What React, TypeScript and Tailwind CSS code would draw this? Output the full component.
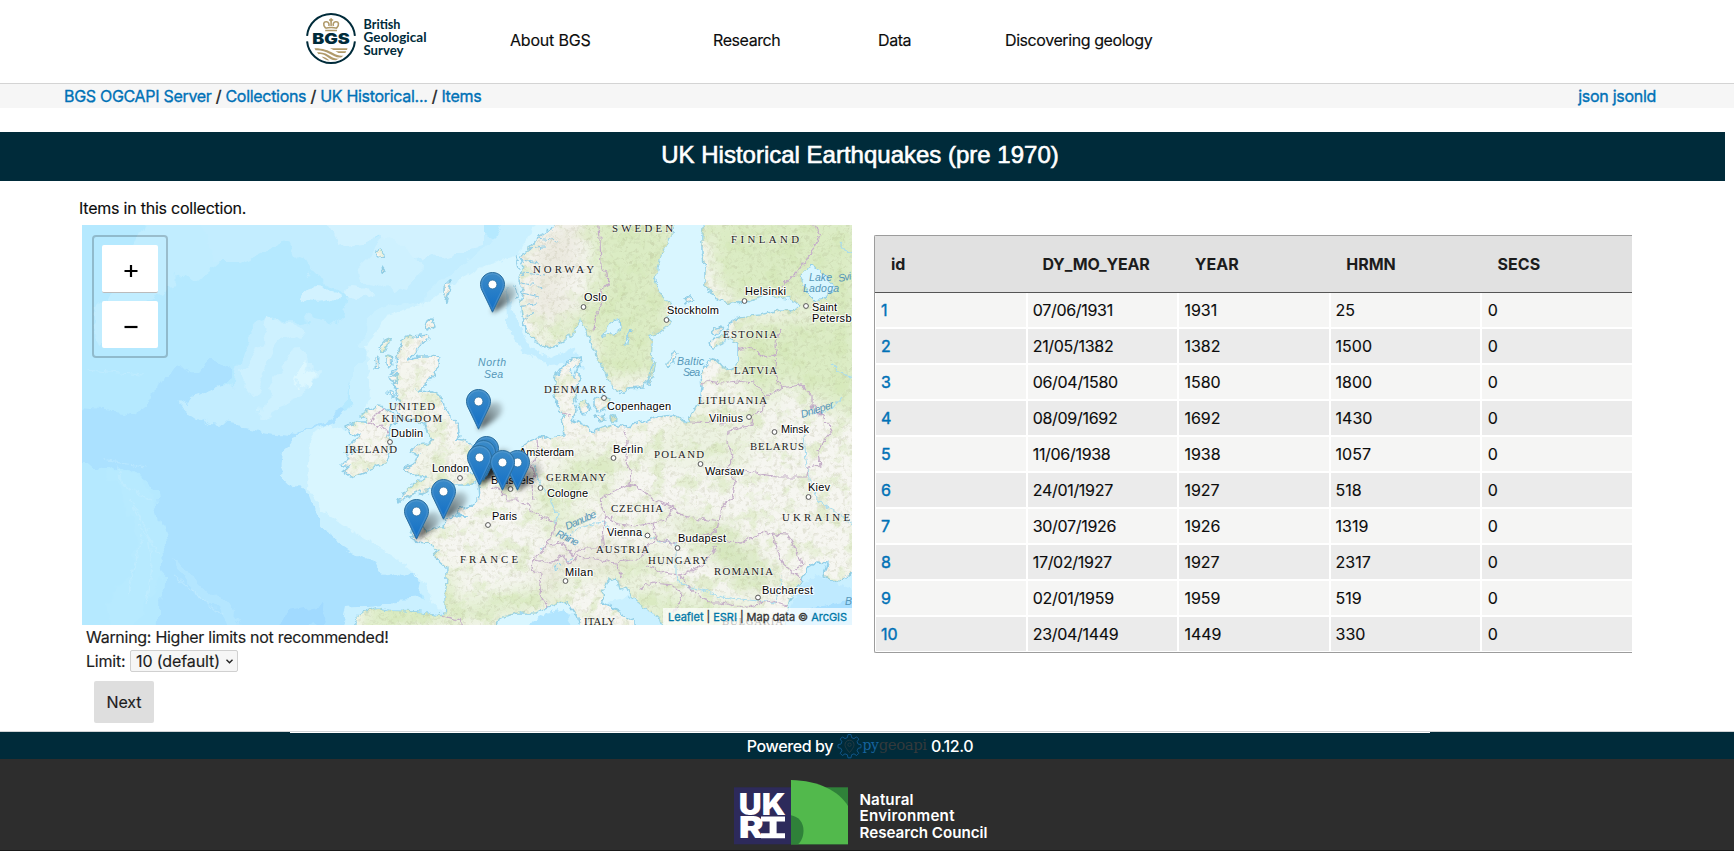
import React from "react";

const rows = [
  ["1", "07/06/1931", "1931", "25", "0"],
  ["2", "21/05/1382", "1382", "1500", "0"],
  ["3", "06/04/1580", "1580", "1800", "0"],
  ["4", "08/09/1692", "1692", "1430", "0"],
  ["5", "11/06/1938", "1938", "1057", "0"],
  ["6", "24/01/1927", "1927", "518", "0"],
  ["7", "30/07/1926", "1926", "1319", "0"],
  ["8", "17/02/1927", "1927", "2317", "0"],
  ["9", "02/01/1959", "1959", "519", "0"],
  ["10", "23/04/1449", "1449", "330", "0"],
];

// [name, x, baseline, width]
const countries: [string, number, number, number][] = [
  ["SWEDEN", 530, 7, 61], ["FINLAND", 649, 18, 68], ["NORWAY", 451, 48, 61],
  ["ESTONIA", 641, 113, 54], ["LATVIA", 652, 149, 43], ["LITHUANIA", 616, 179, 69],
  ["DENMARK", 462, 168, 62], ["UNITED", 307, 185, 46], ["KINGDOM", 300, 197, 60],
  ["IRELAND", 263, 228, 52], ["FRANCE", 378, 338, 58], ["GERMANY", 464, 256, 60],
  ["POLAND", 572, 233, 50], ["BELARUS", 668, 225, 54], ["CZECHIA", 529, 287, 52],
  ["UKRAINE", 700, 296, 68], ["AUSTRIA", 514, 328, 53], ["HUNGARY", 566, 339, 60],
  ["ROMANIA", 632, 350, 59], ["ITALY", 502, 400, 31], ["BULGARIA", 640, 400, 61],
];

// [name, x, baseline, width, dot x, dot y]
const cities: [string, number, number, number, number, number][] = [
  ["Oslo", 502, 76, 23, 501.5, 82], ["Stockholm", 585, 89, 52, 584.5, 95],
  ["Helsinki", 663, 70, 41, 662.5, 76], ["Saint", 730, 86, 25, 724, 81],
  ["Copenhagen", 525, 185, 64, 522, 173], ["Vilnius", 627, 197, 34, 667, 192],
  ["Minsk", 699, 208, 28, 692.5, 207], ["Dublin", 309, 212, 32, 308, 217],
  ["London", 350, 247, 37, 378, 253], ["Amsterdam", 437, 231, 55, 433, 236],
  ["Brussels", 409, 259, 43, 428.5, 264], ["Paris", 410, 295, 25, 406, 300],
  ["Cologne", 465, 272, 41, 458.5, 263], ["Berlin", 531, 228, 30, 531.5, 233],
  ["Warsaw", 623, 250, 39, 618.5, 239], ["Kiev", 726, 266, 22, 726.5, 272],
  ["Vienna", 525, 311, 35, 565.5, 310.5], ["Budapest", 596, 317, 48, 595.5, 323],
  ["Milan", 483, 351, 28, 483.5, 356], ["Bucharest", 680, 369, 51, 676, 372.5],
];

// [name, x, baseline, width, rotation]
const waters: [string, number, number, number, number][] = [
  ["North", 396, 141, 28, 0], ["Sea", 402, 153, 19, 0],
  ["Baltic", 595, 140, 27, 0], ["Sea", 601, 151, 17, 0],
  ["Lake", 727, 56, 23, 0], ["Ladoga", 721, 67, 36, 0],
  ["Svi", 757, 57, 13, -12], ["Dnieper", 720, 193, 34, -18],
  ["Danube", 485, 305, 33, -24], ["Rhine", 473, 311, 24, 25], ["B", 763, 380, 7, 0],
];

// left edge and top of each pin, north to south
const pins: [number, number][] = [
  [398, 47], [384, 164], [392, 211], [389, 215], [385, 220], [423, 225], [408, 225], [349, 254], [322, 274],
];

const BRITAIN =
  "M321 114L324 111L333 112L344 110L346 114L340 119L334 126L327 134L337 131L347 131L358 132L357 139L352 149L346 157L340 163L336 166L347 165L354 168L359 173L362 181L367 191L376 199L377 207L379 211L374 215L380 216L391 220L392 229L388 239L384 246L395 248L395 255L388 260L370 260L356 263L347 264L341 270L336 267L324 272L316 278L320 270L330 261L338 254L346 253L336 250L326 248L322 244L332 239L336 230L328 227L334 220L345 219L350 215L345 207L343 199L338 198L332 194L324 196L318 191L314 184L318 175L313 172L317 163L309 160L315 153L310 148L315 143L314 134L317 126Z";
const IRELAND =
  "M303 182L311 188L314 196L309 202L306 209L308 217L308 228L304 238L292 241L282 248L271 252L261 247L267 242L260 240L267 233L264 228L276 226L266 222L273 215L279 211L266 207L264 201L275 197L285 197L280 191L287 184L296 181Z";
const CONTINENT =
  "M498 132L484 138L474 150L472 165L475 180L480 190L481 203L482 210L474 211L468 215L462 211L448 216L440 222L436 233L431 243L418 250L404 253L397 262L398 273L389 281L378 284L375 290L384 291L372 292L363 295L362 303L350 302L346 306L335 300L328 305L332 311L328 312L336 317L346 318L356 326L352 331L365 343L365 357L363 372L364 387L359 390L335 387L310 386L295 383L281 387L274 393L274 412L410 412L418 393L435 388L453 388L466 382L478 376L488 380L496 392L499 412L553 412L553 397L538 387L521 377L520 367L525 357L535 353L538 364L545 362L550 373L565 385L578 393L585 412L701 412L704 388L706 380L711 367L720 357L725 343L735 337L746 338L741 350L754 358L764 351L785 344L785 -12L623 -12L620 10L620 27L623 43L623 60L635 75L648 78L665 77L685 70L706 73L718 80L711 86L698 85L678 90L658 92L645 100L646 113L656 118L656 137L651 145L641 142L633 133L625 138L619 150L620 163L618 177L611 187L605 197L591 190L575 192L558 197L545 202L531 200L521 203L511 207L503 200L491 196L494 186L492 177L495 170L493 163L499 153L494 147L499 139Z";
const SCANDINAVIA =
  "M478 -12L470 3L461 10L455 13L448 23L438 33L442 42L436 53L442 65L438 76L440 90L443 105L455 118L468 123L481 117L493 105L498 93L503 103L510 120L515 133L525 150L528 160L541 170L545 163L561 162L568 150L570 133L571 117L565 110L578 107L588 100L585 92L591 83L578 68L573 53L575 42L578 30L586 17L591 7L593 -12Z";
const ISLANDS =
  "M496 178L504 176L508 184L502 189L497 185Z M512 174L520 170L527 174L524 184L517 187L512 181Z M513 191L521 190L524 195L516 196Z M528 193L532 191L534 195L530 197Z M586 138L592 127L596 128L592 136L587 142Z M565 160L572 138L574 138L568 160Z M630 104L638 102L641 106L633 109Z M628 116L640 111L644 116L636 120L630 124Z M603 73L609 71L611 76L605 78Z M297 123L305 114L308 115L304 124L301 128Z M294 133L297 130L296 143L293 144Z M304 130L309 131L311 140L307 143L304 138Z M307 152L314 149L316 156L310 159Z M306 168L311 166L311 173Z M362 62L369 55L367 67L364 77L362 69Z M343 97L350 94L352 101L345 105Z M294 26L299 24L302 30L299 34L295 30Z M300 40L303 44L301 48Z";
const LAND = [BRITAIN, IRELAND, CONTINENT, SCANDINAVIA, ISLANDS].join(" ");
const BORDERS =
  "M516 -10L518 15L519 40L525 48L526 58L518 68L521 78L514 88L512 105M728 -8L738 10L728 30L715 47L699 62M656 125L668 122L676 128L685 133L695 130L693 120L699 103M695 133L692 148L700 163L684 171L672 158L655 156L640 158L625 156L620 160M700 163L718 160L730 170L730 180L739 190L750 205L742 215L736 228L738 240L726 242L725 252L695 252L668 247L646 244M684 171L680 186L671 190L670 200L647 206L646 218L651 230L646 244L653 258L651 273L640 282L637 297M606 197L647 198M541 203L545 215L544 235L549 247L547 260L560 264L574 276L591 282L600 291L637 297M547 260L530 268L518 274L523 290L537 299L554 301L570 298L584 296L591 282M570 298L575 314L590 318L610 316L635 305L637 297M523 290L520 310L522 323L502 323L490 330L480 318L466 320M475 297L460 292L450 288L446 280L435 275L425 275L418 265L410 262M475 297L466 320L452 333L450 343L460 349L458 370L466 382M452 335L470 338L480 330L488 340L495 332L520 335L532 338L560 333L565 322L575 314M532 338L540 352M565 340L580 348L598 350L620 340L635 320M598 350L605 360L615 369L630 378L640 378M558 363L570 358L590 360L600 370L592 388M635 312L660 318L680 307L690 309L700 338L720 355M690 309L705 310L715 325L720 340L712 345M640 378L660 383L690 376L706 380M455 215L456 230L449 240L453 250L450 260L452 275M480 188L488 191M303 182L294 190L287 197L295 202L300 200L306 207M359 390L378 396L385 408";
const RIVERS =
  "M452 240L458 260L470 275L475 290L473 300M484 310L500 302L520 297L530 306L565 312L580 316L594 318L594 350L600 360L620 365L640 372L676 376L695 378L700 350M722 190L735 188L748 186L760 172M722 210L724 235L727 250L735 275L750 285L780 306M750 140L760 148L780 157M758 18L765 28L780 34";

function EuropeMap() {
  return (
    <svg width="770" height="400" viewBox="0 0 770 400" className="block">
      <defs>
        <clipPath id="land"><path d={LAND} /></clipPath>
        <filter id="soft" x="-20%" y="-20%" width="140%" height="140%"><feGaussianBlur stdDeviation="9" /></filter>
        <filter id="shade" x="-60%" y="-60%" width="220%" height="220%"><feGaussianBlur stdDeviation="2.6" /></filter>
        <filter id="rough" filterUnits="userSpaceOnUse" x="-15" y="-15" width="800" height="430">
          <feTurbulence type="fractalNoise" baseFrequency="0.16" numOctaves="3" seed="4" result="n" />
          <feDisplacementMap in="SourceGraphic" in2="n" scale="7" xChannelSelector="R" yChannelSelector="G" />
        </filter>
        <filter id="depths" filterUnits="userSpaceOnUse" x="-30" y="-30" width="830" height="460">
          <feTurbulence type="fractalNoise" baseFrequency="0.028" numOctaves="4" seed="8" result="n" />
          <feDisplacementMap in="SourceGraphic" in2="n" scale="34" xChannelSelector="R" yChannelSelector="G" />
        </filter>
        <filter id="forest" x="0" y="0" width="100%" height="100%" colorInterpolationFilters="sRGB">
          <feTurbulence type="fractalNoise" baseFrequency="0.06" numOctaves="5" seed="11" />
          <feColorMatrix values="0 0 0 0 0.82  0 0 0 0 0.9  0 0 0 0 0.7  3.4 2 0 0 -2.65" />
        </filter>
        <filter id="relief" x="0" y="0" width="100%" height="100%" colorInterpolationFilters="sRGB">
          <feTurbulence type="fractalNoise" baseFrequency="0.25" numOctaves="3" seed="2" />
          <feColorMatrix values="0 0 0 0 0.62  0 0 0 0 0.62  0 0 0 0 0.48  3 0 0 0 -1.5" />
        </filter>
        <linearGradient id="pin" x1="0" y1="0" x2="0" y2="1">
          <stop offset="0" stopColor="#3b8bc8" /><stop offset="1" stopColor="#126fc6" />
        </linearGradient>
        <linearGradient id="fall" x1="0" y1="1" x2="1" y2="0">
          <stop offset="0" stopColor="#000" stopOpacity=".75" /><stop offset=".45" stopColor="#000" stopOpacity=".45" /><stop offset="1" stopColor="#000" stopOpacity=".08" />
        </linearGradient>
      </defs>

      <rect width="770" height="400" fill="#b5e9ff" />
      <g filter="url(#depths)">
        <path d="M-20 185L40 190L75 165L100 148L135 128L150 150L130 178L160 200L210 180L250 172L262 195L222 215L220 260L240 300L300 330L345 365L345 420L75 420L78 330L70 260L30 235L-20 240Z" fill="#abe1ff" />
        <path d="M75 -20L135 -20L145 30L115 55L80 60L60 90L20 120L10 90L50 50Z" fill="#c1edff" />
        <path d="M120 -20L250 -20L290 15L380 -20L420 20L350 85L285 110L270 180L215 210L130 200L100 180L150 160L155 130L175 105L225 92L260 100L265 70L225 50L205 15L160 35L130 35Z" fill="#c3edff" />
        <path d="M230 -20L400 -20L400 15L330 35L290 12L250 18Z" fill="#d2f2ff" />
        <path d="M285 25Q305 5 335 30Q345 52 310 70Q280 55 285 25M155 150L190 100L220 98L222 110L192 122L170 170ZM205 135Q230 115 232 140L205 185L180 195L185 160Z" fill="#ceF1ff" />
        <ellipse cx="240" cy="73" rx="17" ry="9" fill="#d2f2ff" /><ellipse cx="275" cy="65" rx="15" ry="8" fill="#d2f2ff" />
        <path d="M222 138Q235 125 226 150L210 160Z" fill="#dcf7ff" />
        <path d="M208 215Q240 200 275 185L275 120L292 95L345 70L395 25L430 -10L610 -20L790 0L790 420L262 420L270 385L350 380L330 352L280 330L235 300L222 266L205 245Z" fill="#caf0ff" />
        <path d="M30 238L60 255L72 285L82 335L58 400L32 420L24 380L54 345L50 290L24 258Z" fill="#b7eaff" />
        <path d="M92 340L115 350L150 383L170 410L140 392L112 368Z" fill="#b4e6ff" />
        <path d="M205 385L240 378L235 400L200 410Z" fill="#a1daff" />
      </g>
      <g filter="url(#rough)">
        <path d="M228 215Q240 190 270 210L288 175L285 120L305 90L345 78L370 60L400 42L436 30L460 -12L785 -12L785 300L410 412L364 390L350 378L345 360L310 330L260 300L240 285L226 262Z" fill="#d9f6ff" />
        <path d="M424 60L432 90L448 122L468 133L492 122L502 145L490 138L468 140L440 126L425 100Z" fill="#c3edff" />
        <path d="M700 412L716 362L735 350L785 370V412Z" fill="#bfeaff" /><path d="M722 385L785 372V412H715Z" fill="#a8dfff" />
        <path d="M425 412L465 388L482 384L495 412Z" fill="#b2e5ff" />
      </g>
      <g fill="none" stroke="#cdf0ff" strokeWidth="1.2" opacity="0.4" filter="url(#rough)">
        <path d="M20 235L64 242M35 240L40 260L70 275M48 275L65 305L70 340L64 380M56 300L78 330M60 310L45 370M92 350L140 390M5 145L60 150" />
      </g>

      <g filter="url(#rough)">
        <path d={LAND} fill="#f6f6f1" stroke="#92d0ea" strokeWidth="1.5" strokeLinejoin="round" />
        <g clipPath="url(#land)">
          <g filter="url(#soft)" fill="#dbecc4">
            <path d="M505 -10L600 -10L580 60L590 90L570 150L520 155L510 105L450 120L470 100L498 85L515 60Z" />
            <path d="M620 -10H780V95L710 80L640 70Z" />
            <path d="M660 95L780 90V200L700 155L690 180L650 150Z" />
            <path d="M345 345L375 350L370 380L470 360L500 340L590 325L560 350L500 350L450 385L280 410V385Z" />
            <path d="M575 290L640 300L690 350L680 370L640 340L600 305Z" fill="#d4e6bc" />
            <path d="M500 225L540 240L520 265L480 275L500 300L465 310L450 270Z" opacity=".7" />
            <path d="M530 355L600 370L680 385L690 410H585Z" opacity=".8" />
            <path d="M315 150L330 145L345 205L335 240L320 275L385 260L355 235L350 190Z" opacity=".25" />
            <path d="M610 180L680 190L660 250L550 235Z" opacity=".35" />
          </g>
          <rect x="-10" y="-10" width="790" height="420" filter="url(#forest)" opacity=".5" />
          <path d="M455 15L500 -5L490 50L465 65L500 75L465 95L450 85ZM455 340L480 325L530 320L560 330L520 345L480 340L465 378Z" fill="#ebe9df" filter="url(#soft)" />
          <rect x="-10" y="-10" width="790" height="420" filter="url(#relief)" opacity=".24" />
        </g>
        <g fill="#d9f6ff" stroke="#92d0ea" strokeWidth="1">
          <path d="M520 113L528 98L538 94L539 104L530 110L525 109ZM727 70L719 52L730 40L743 50L753 63L745 73L733 76ZM543 120L549 104L546 120ZM488 144L496 140L492 153Z" />
          <path d="M485 336L491 333M472 346L478 338M458 324L464 321" fill="none" />
        </g>
        <path d={RIVERS} fill="none" stroke="#a9dcee" strokeWidth="1.1" />
        <path d={BORDERS} fill="none" stroke="#c4adc8" strokeWidth="1.2" />
      </g>
      <g fill="none" stroke="#8fcce6" strokeWidth="1" filter="url(#rough)">
        <path d="M440 35L457 38M438 48L465 50M437 56L460 62M440 68L458 72M438 82L455 78M447 24L462 22M455 13L475 16M441 95L452 88M434 30L437 45M433 60L436 75" />
      </g>

      <g fontFamily="'Liberation Serif', serif" fontSize="10.8" fill="#222" stroke="#f8f8f4" strokeWidth="1.4" strokeOpacity=".7" paintOrder="stroke">
        {countries.map(([t, x, y, w]) => (
          <text key={t} x={x} y={y} textLength={w}>{t}</text>
        ))}
      </g>
      <g fontFamily="'Liberation Sans', sans-serif" fontSize="10.5" fontStyle="italic" fill="#5596b8">
        {waters.map(([t, x, y, w, r], i) => (
          <text key={i} x={x} y={y} textLength={w} transform={`rotate(${r} ${x} ${y})`}>{t}</text>
        ))}
      </g>
      <g fontFamily="'Liberation Sans', sans-serif" fontSize="11" fill="#000" stroke="#fff" strokeWidth="2.2" strokeOpacity=".85" strokeLinejoin="round" paintOrder="stroke">
        {cities.map(([t, x, y, w]) => (
          <text key={t} x={x} y={y} textLength={w}>{t}</text>
        ))}
        <text x="730" y="97" textLength="39.5">Petersb</text>
      </g>
      {cities.map(([t, , , , cx, cy]) => (
        <circle key={t} cx={cx} cy={cy} r="2.4" fill="#fff" stroke="#555" strokeWidth="1" />
      ))}

      {pins.map(([x, y], i) => (
        <path key={i} transform={`translate(${x} ${y})`} d="M12 41L18 22Q24 11 33 13Q40 17 34 26Q28 33 12 41Z" fill="url(#fall)" filter="url(#shade)" />
      ))}
      {pins.map(([x, y], i) => (
        <g key={i} transform={`translate(${x} ${y})`}>
          <path d="M12.5 .5C5.8 .5 .5 5.8 .5 12.4C.5 15.4 1.6 17.6 2.8 20L12.5 40.2L22.2 20C23.4 17.6 24.5 15.4 24.5 12.4C24.5 5.8 19.2 .5 12.5 .5Z" fill="url(#pin)" stroke="#2c6f9f" strokeWidth="1" />
          <path d="M12.5 1.7C6.4 1.7 1.7 6.5 1.7 12.4C1.7 15.2 2.8 17.4 3.9 19.6L12.5 37.5L21.1 19.6C22.2 17.4 23.3 15.2 23.3 12.4C23.3 6.5 18.6 1.7 12.5 1.7Z" fill="none" stroke="#fff" strokeOpacity=".12" strokeWidth="1.1" />
          <circle cx="12.5" cy="12.5" r="4.4" fill="#fff" stroke="#2c6f9f" strokeWidth=".8" />
        </g>
      ))}
    </svg>
  );
}

function BgsLogo() {
  return (
    <svg width="122" height="54" viewBox="0 0 122 54" className="block">
      <path d="M1.1 23.5A24 24 0 0 1 48.9 23.5M1.1 29A24 24 0 0 0 48.9 29" transform="translate(0 .3)" fill="none" stroke="#002b3a" strokeWidth="2" />
      <g fill="none" stroke="#b09a6a" strokeWidth="1.6">
        <path d="M19.2 18.5H31M19.5 16C16.5 12.5 17.5 9.5 20.5 9.8C22.5 10 23.5 12 22.8 14M30.7 16C33.7 12.5 32.7 9.5 29.7 9.8C27.7 10 26.7 12 27.4 14M19.3 16.3Q25 14.6 31 16.3M25.1 8V14" />
        <path d="M23 8H27.2M25.1 6.2V9.6" />
      </g>
      <text x="6.2" y="31.6" textLength="37.5" lengthAdjust="spacingAndGlyphs" fontFamily="Inter, sans-serif" fontWeight="900" fontSize="14.3" fill="#002b3a">BGS</text>
      <g fill="#b09a6a">
        <path d="M8.5 36.3C17 36.2 22 38.4 27 41.1C31 43.2 34 44.2 37.5 43.6L35.5 45.3C31 46.2 27.5 43.8 23.5 41.7C19 39.3 15 37.9 9.5 38.2Z" />
        <path d="M11 40.3C17 39.5 21.5 42.2 24.5 44.2C27 46 30 46.9 33 46.6L30 48.2C26 48.4 24 46.8 21.5 45C18.5 42.9 16 41.7 12.5 42.2Z" />
        <path d="M15.5 44.5C18.5 44.8 21 46.5 23.5 48.6C20.5 48.5 17.5 46.8 15.5 44.5Z" />
        <path d="M24 36.3H41.5L41 38H27.5ZM29.5 39.3H40.3L39.3 41H32.5Z" />
      </g>
      <g fontFamily="Lato, sans-serif" fontWeight="700" fontSize="12.6" fill="#002b3a">
        <text x="57.5" y="16.8" textLength="37" lengthAdjust="spacingAndGlyphs">British</text>
        <text x="57.5" y="29.8" textLength="63" lengthAdjust="spacingAndGlyphs">Geological</text>
        <text x="57.5" y="42.8" textLength="40" lengthAdjust="spacingAndGlyphs">Survey</text>
      </g>
    </svg>
  );
}

function PygeoapiLogo() {
  return (
    <svg width="91" height="26" viewBox="0 0 91 26" className="block">
      <g fill="none" stroke="#10568a" strokeWidth="1">
        <path d="M11 1.5H14L14.6 4.6L17 5.6L19.6 3.9L21.8 6.1L20.1 8.7L21.1 11.1L24 11.7V14.7L21.1 15.3L20.1 17.7L21.8 20.3L19.6 22.5L17 20.8L14.6 21.8L14 24.8H11L10.4 21.8L8 20.8L5.4 22.5L3.2 20.3L4.9 17.7L3.9 15.3L1 14.7V11.7L3.9 11.1L4.9 8.7L3.2 6.1L5.4 3.9L8 5.6L10.4 4.6Z" />
      </g>
      <g fill="none" stroke="#243b44" strokeWidth="1">
        <path d="M12.5 19.5C9 15.5 8 13.5 8 11.7A4.5 4.5 0 0 1 17 11.7C17 13.5 16 15.5 12.5 19.5Z" /><circle cx="12.5" cy="11.7" r="1.7" />
      </g>
      <g fontFamily="'DejaVu Serif', serif" fontSize="14">
        <text x="25.5" y="17" textLength="16" lengthAdjust="spacingAndGlyphs" fill="#16639e">py</text>
        <text x="41.7" y="17" textLength="48" lengthAdjust="spacingAndGlyphs" fill="#343a3c">geoapi</text>
      </g>
    </svg>
  );
}

function UkriLogo() {
  return (
    <svg width="256" height="66" viewBox="0 0 256 66" className="block">
      <rect y="8.3" width="57" height="57" fill="#2d2a5b" />
      <g fontFamily="Inter, sans-serif" fontWeight="900" fill="#fff">
        <text x="4.8" y="35.5" fontSize="29.5" textLength="47" lengthAdjust="spacingAndGlyphs">UK</text>
        <text x="4.8" y="59" fontSize="29.5" textLength="25" lengthAdjust="spacingAndGlyphs">R</text>
      </g>
      <path d="M27 37.4H51V42.4H42.6V54.2H51V59.2H27V54.2H35.6V42.4H27Z" fill="#fff" />
      <rect x="57" y="8.3" width="57" height="57" fill="#2f8139" />
      <path d="M57 .9C85 1.5 105 12 114 27V65.3H57Z" fill="#52b94c" />
      <path d="M57 36.3C64 37.5 69.5 43 69.5 51.5C69.5 58 67 62.5 64 65.3H57Z" fill="#2f8139" />
      <g fontFamily="Inter, sans-serif" fontWeight="600" fontSize="15.2" fill="#fff">
        <text x="125.5" y="25.8" textLength="54">Natural</text>
        <text x="125.5" y="42.2" textLength="95">Environment</text>
        <text x="125.5" y="58.8" textLength="128">Research Council</text>
      </g>
    </svg>
  );
}

export default function App() {
  return (
    <div className="flex h-[851px] w-[1734px] flex-col overflow-hidden bg-white font-['Inter',sans-serif] text-[16px] leading-6 text-[#0c0c0c]">
      <header className="flex h-[84px] shrink-0 border-b border-[#d4d4d4] pl-[306px] pt-3">
        <BgsLogo />
        <nav className="flex pt-4 tracking-[-0.42px] [-webkit-text-stroke:0.15px]">
          <a className="ml-[82px] w-[203px] tracking-[-0.2px]">About BGS</a>
          <a className="w-[165px]">Research</a>
          <a className="w-[127px]">Data</a>
          <a>Discovering geology</a>
        </nav>
      </header>
      <div className="flex h-6 shrink-0 items-center justify-between bg-[#f6f6f6] pl-16 pr-[78px] tracking-[-0.3px] text-[#0071b6] [-webkit-text-stroke:0.35px]">
        <div className="whitespace-pre">
          BGS OGCAPI Server<span className="text-[#222]"> / </span>Collections<span className="text-[#222]"> / </span>UK Historical...<span className="text-[#222]"> / </span>Items
        </div>
        <div className="tracking-[-0.28px]">json jsonld</div>
      </div>

      <h1 className="mt-6 flex h-[49px] w-[1725px] shrink-0 justify-center bg-[#002b3a] pt-[7px] font-['Liberation_Sans',sans-serif] text-[24px] leading-8 text-white [-webkit-text-stroke:0.6px]">
        <span className="mr-[5px]">UK Historical Earthquakes (pre 1970)</span>
      </h1>

      <main className="flex h-[550px] shrink-0">
        <section className="w-[874px] shrink-0 pl-[82px] pt-[15px]">
          <p className="-ml-[3px] h-[29px] tracking-[-0.23px] leading-6 [-webkit-text-stroke:0.15px]">Items in this collection.</p>
          <div className="relative h-[400px] w-[770px] overflow-hidden bg-[#b5e9ff]">
            <EuropeMap />
            <div className="absolute left-[10px] top-[10px] flex h-[123px] w-[76px] flex-col gap-2 rounded-[4px] border-2 border-black/20 px-2 pt-2">
              <button className="flex h-12 items-center justify-center rounded-[2px] border-b border-[#bbb] bg-white pl-[2px] pt-1" aria-label="Zoom in">
                <svg width="14" height="14" viewBox="0 0 14 14"><path d="M7 1V13M.5 7H13.5" stroke="#000" strokeWidth="2.2" /></svg>
              </button>
              <button className="flex h-[47px] items-center justify-center rounded-[2px] bg-white pl-[2px] pt-[5px]" aria-label="Zoom out">
                <svg width="14" height="14" viewBox="0 0 14 14"><path d="M.5 7H13.5" stroke="#000" strokeWidth="2.2" /></svg>
              </button>
            </div>
            <div className="absolute bottom-0 right-0 h-[17px] w-[189px] whitespace-nowrap bg-white/70 pl-[5px] text-[11px] leading-[19px] tracking-[-0.03px] text-[#333] [-webkit-text-stroke:0.3px]">
              <span className="text-[#0078a8]">Leaflet</span> | <span className="text-[#0078a8]">ESRI</span> | Map data © <span className="text-[#0078a8]">ArcGIS</span>
            </div>
          </div>
          <div className="pl-1 text-[#1c1c1c] [-webkit-text-stroke:0.15px]">
            <p className="h-6 tracking-[-0.28px]">Warning: Higher limits not recommended!</p>
            <div className="flex h-6 items-center">
              <span className="w-11 tracking-[-0.2px]">Limit:</span>
              <span className="flex h-[22px] w-[108px] items-center justify-between rounded-[2px] border border-[#d0d0d0] bg-[#f6f6f6] pl-[5px] pr-1 tracking-[-0.1px]">
                10 (default)
                <svg width="7" height="5" viewBox="0 0 7 5"><path d="M.5 .7L3.5 3.7L6.5 .7" fill="none" stroke="#222" strokeWidth="1.4" /></svg>
              </span>
            </div>
            <button className="ml-2 mt-2 block h-[42px] w-[60px] rounded-[2px] bg-[#dedede] tracking-[-0.1px]">Next</button>
          </div>
        </section>

        <section className="w-[758px] shrink-0 pt-[54px]">
          <div className="rounded-l-[2px] border-y border-l border-[#9c9c9c]">
            <div className="grid h-[57px] grid-cols-5 items-center border-b border-[#555] bg-[#e1e1e1] font-bold text-[#1c1c1c]">
              <span className="pl-4">id</span>
              <span className="pl-4 tracking-[-0.15px]">DY_MO_YEAR</span>
              <span className="pl-[17px]">YEAR</span>
              <span className="pl-[17px]">HRMN</span>
              <span className="pl-[17px]">SECS</span>
            </div>
            <div className="flex flex-col gap-[2px] pb-[1px] pl-px [-webkit-text-stroke:0.12px]">
              {rows.map((r, i) => (
                <div key={r[0]} className={i % 2 ? "grid h-[34px] grid-cols-5 leading-[34px] [&>span]:bg-[#ebebeb]" : "grid h-[34px] grid-cols-5 leading-[34px] [&>span]:bg-[#f5f5f4]"}>
                  {r.map((c, j) => (
                    <span key={j} className={j === 0 ? "mr-px pl-[5px] text-[#0071b6] [-webkit-text-stroke:0.4px]" : j === 4 ? "ml-px pl-[6px]" : j === 1 ? "mx-px pl-[4.5px] tracking-[-0.3px]" : "mx-px pl-[5px]"}>{c}</span>
                  ))}
                </div>
              ))}
            </div>
          </div>
        </section>
      </main>

      <footer className="flex grow flex-col border-t border-[#d0d4d6] bg-[#2d2d2d]">
        <div className="flex h-[27px] shrink-0 flex-col items-center bg-[#002b3a] pr-[14px] text-white">
          <div className="h-px w-[1140px] shrink-0 bg-white" />
          <div className="flex h-[26px] items-center font-medium tracking-[-0.4px]">
            <span className="mr-1">Powered by</span>
            <PygeoapiLogo />
            <span className="ml-[3px]">0.12.0</span>
          </div>
        </div>
        <div className="flex grow border-b border-[#191919] pl-[734px] pt-5">
          <UkriLogo />
        </div>
      </footer>
    </div>
  );
}
